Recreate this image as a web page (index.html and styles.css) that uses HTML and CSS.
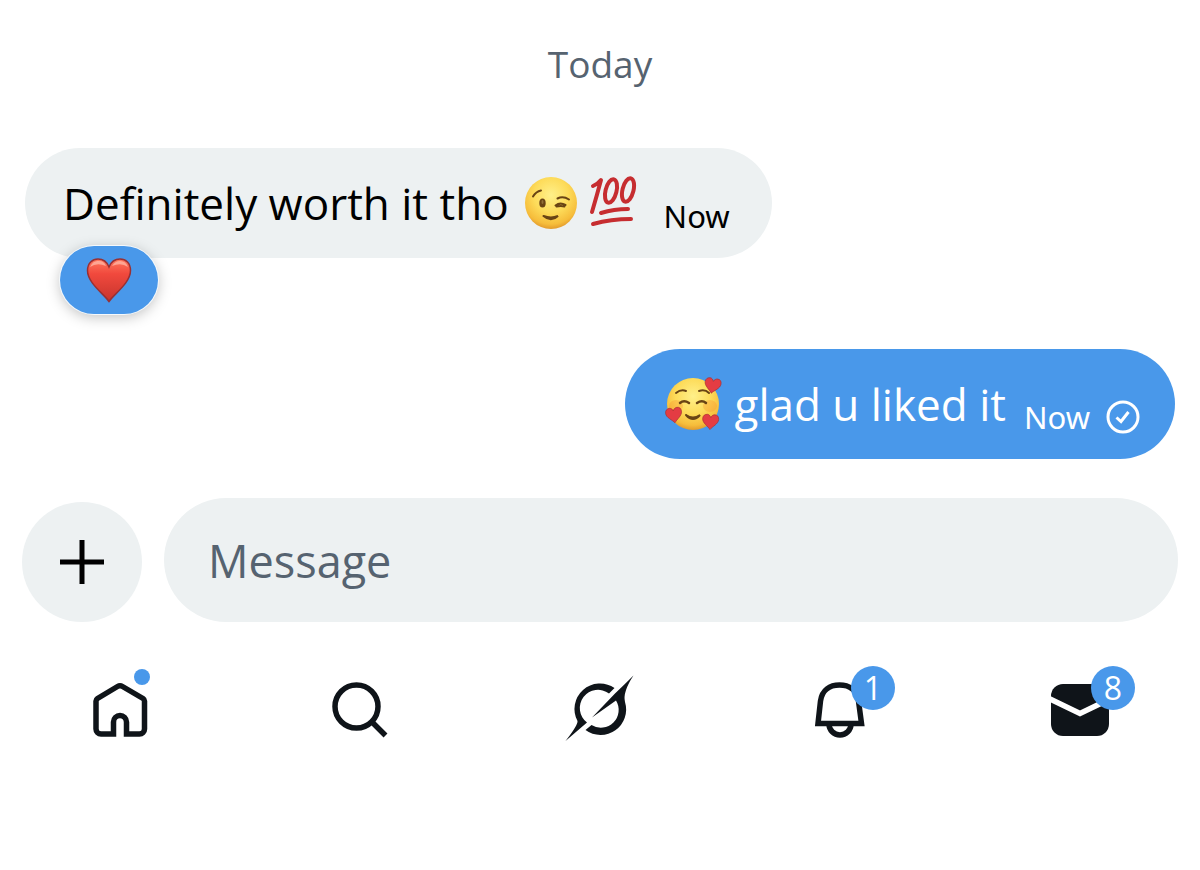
FILE: index.html
```html
<!doctype html>
<html lang="en">
	<head>
		<title>Messages</title>
		<meta charset="utf-8">
		<meta name="viewport" content="width=device-width, initial-scale=1">
		<link rel="stylesheet" href="styles.css">
	</head>
	<body>

		<main class="chat">
			<p class="day">Today</p>

			<!-- received -->
			<div class="row">
				<div class="bubble bubble-in">
					<span class="text">Definitely worth it tho</span>
					<svg class="emoji wink" viewBox="0 0 54 54" role="img" aria-label="winking face">
						<defs>
							<radialGradient id="face" cx="50%" cy="35%" r="68%">
								<stop offset="0" stop-color="#fff08a"/>
								<stop offset=".5" stop-color="#fddb59"/>
								<stop offset=".82" stop-color="#f6bd3b"/>
								<stop offset="1" stop-color="#dc9028"/>
							</radialGradient>
						</defs>
						<circle cx="27" cy="27" r="26" fill="url(#face)"/>
						<g fill="none" stroke="#694414" stroke-width="2" stroke-linecap="round">
							<path d="M9 20.500Q12 15.500 17 14.500M33.500 22.500Q39 19.500 45 23.500"/>
							<path d="M31.500 29.500Q36 26 41.500 29M32.500 30.500Q37 29.500 40.500 30.500"/>
							<path d="M19.500 40Q27 46.500 34 40Q27 43 19.500 40" fill="#694414"/>
						</g>
						<ellipse cx="18.500" cy="27" rx="3.200" ry="4.500" fill="#694414"/>
						<ellipse cx="18.500" cy="26" rx="1" ry="2" fill="#93713a"/>
					</svg>
					<svg class="emoji hundred" viewBox="0 0 50 54" role="img" aria-label="hundred points">
						<g fill="none" stroke="#c62d30" stroke-width="4" stroke-linecap="round" stroke-linejoin="round">
							<path d="M4 10Q9 8 12 4Q8 19 3 36"/>
							<ellipse cx="22" cy="15" rx="5.500" ry="12" transform="rotate(14 22 15)"/>
							<ellipse cx="39" cy="14" rx="5.500" ry="12" transform="rotate(14 39 14)"/>
							<path d="M12 37Q25 33 39 33M4 48Q22 43 42 43"/>
						</g>
					</svg>
					<span class="time">Now</span>
				</div>
				<button class="reaction" type="button" aria-label="Heart reaction">
					<svg class="heart" viewBox="0 0 46 46">
						<defs>
							<linearGradient id="red" x1="0" y1="0" x2="0" y2="1">
								<stop offset="0" stop-color="#ff795f"/>
								<stop offset=".35" stop-color="#f1493d"/>
								<stop offset="1" stop-color="#c7342d"/>
							</linearGradient>
						</defs>
						<path d="M23 44.500C18 37 1.500 26 1.500 13.500C1.500 6 6.500 2 12 2C17 2 21 5 23 10C25 5 29 2 34 2C40 2 44.500 6 44.500 13.500C44.500 26 28 37 23 44.500Z" fill="url(#red)" stroke="#993033" stroke-width="1.500"/>
						<path d="M4 10Q7 3 13 4Q18 4 20 9Q11 5 4 10M26 9Q29 4 34 4Q40 4 42 10Q35 5 26 9" fill="#ffc4b6" opacity=".65"/>
					</svg>
				</button>
			</div>

			<!-- sent -->
			<div class="row row-out">
				<div class="bubble bubble-out">
					<svg class="emoji love" viewBox="0 0 58 56" role="img" aria-label="smiling face with hearts">
						<defs>
							<path id="mini-heart" d="M8 15C6 12 0 9 0 4.500C0 1.500 2 0 4.500 0C6 0 7.500 1.500 8 3C8.500 1.500 10 0 12 0C14.500 0 16 1.500 16 4.500C16 9 10 12 8 15Z" fill="#e43c43" stroke="#a93132" stroke-width=".7"/>
						</defs>
						<circle cx="29" cy="28" r="26" fill="url(#face)"/>
						<ellipse cx="12" cy="30" rx="7" ry="6" fill="#f98b2c" opacity=".3"/>
						<ellipse cx="46" cy="30" rx="7" ry="6" fill="#f98b2c" opacity=".3"/>
						<g fill="none" stroke="#694414" stroke-width="2" stroke-linecap="round">
							<path d="M12 17Q17 13 22 15M35 15Q41 13 45 17"/>
							<path d="M16 27Q20 23.500 25 27M33 27Q38 23.500 42 27" stroke-width="2.500"/>
							<path d="M22 39Q29 44 36 39Q29 47 22 39" fill="#694414"/>
						</g>
						<use href="#mini-heart" transform="translate(42 1) rotate(10)"/>
						<use href="#mini-heart" transform="translate(1 33) rotate(-8)"/>
						<use href="#mini-heart" transform="translate(39 38) rotate(4)"/>
					</svg>
					<span class="text">glad u liked it</span>
					<span class="time">Now</span>
					<svg class="check" viewBox="0 0 34 34" role="img" aria-label="Sent">
						<circle cx="17" cy="17" r="15" fill="none" stroke="#fff" stroke-width="3"/>
						<path d="M10.500 17.500L15 21.500L22.500 12" fill="none" stroke="#fff" stroke-width="3"/>
					</svg>
				</div>
			</div>
		</main>

		<form class="composer">
			<button class="add" type="button" aria-label="Add attachment">
				<svg class="plus" viewBox="0 0 44 44">
					<path d="M22 0V44M0 22H44" stroke="#000" stroke-width="5"/>
				</svg>
			</button>
			<input class="field" type="text" placeholder="Message" aria-label="Message">
		</form>

		<nav class="tabs">
			<a class="tab" href="#home" aria-label="Home">
				<svg class="icon" viewBox="15 15 70 70">
					<path class="line" d="M43.500 74H31A5 5 0 0 1 26 69V41Q26 39.500 27.500 38.500L47.500 26.500Q50 25 52.500 26.500L73 38.500Q74.500 39.500 74.500 41V69A5 5 0 0 1 69.500 74H56.500V62A6.500 6.500 0 0 0 43.500 62Z"/>
				</svg>
				<span class="dot"></span>
			</a>
			<a class="tab" href="#search" aria-label="Search">
				<svg class="icon" viewBox="15 15 70 70">
					<circle class="line" cx="46.500" cy="46.500" r="21.500"/>
					<path class="line" d="M62 62L75.500 75.500"/>
				</svg>
			</a>
			<a class="tab" href="#grok" aria-label="Grok">
				<svg class="icon" viewBox="15 15 70 70">
					<path d="M64.500 28A25.500 25.500 0 0 0 27.500 61Q28 65 15.500 81L37 62.500A17.800 17.800 0 0 1 59 33.500Z"/>
					<path d="M42 57.500L65 33.500Q74 25 83.500 15.500Q72.500 32 75 42A25.500 25.500 0 0 1 35.500 70L41.500 65A17.800 17.800 0 0 0 66 40.500Z"/>
				</svg>
			</a>
			<a class="tab" href="#notifications" aria-label="Notifications">
				<svg class="icon" viewBox="5 20 70 70">
					<path class="line" d="M18 68.500L20.500 46C22 35 30 30 39.500 30S57 35 58.500 46L61.500 68.500Z"/>
					<path class="line" d="M29 69A10.500 10.500 0 0 0 51 69"/>
				</svg>
				<span class="badge">1</span>
			</a>
			<a class="tab" href="#messages" aria-label="Messages">
				<svg class="icon" viewBox="10 20 70 70">
					<rect x="16" y="29" width="58" height="52" rx="12"/>
					<path d="M14 43.500L45 58.500L76 43.500" fill="none" stroke="#fff" stroke-width="5.500"/>
				</svg>
				<span class="badge">8</span>
			</a>
		</nav>
	</body>
</html>
```

FILE: styles.css
```css
*{
	box-sizing:border-box;
}

body{
	margin:0;
	background:#fff;
	color:#000;
	font-family:"Open Sans","Noto Sans",sans-serif;
}

svg{
	display:block;
	flex:none;
}

button{
	border:0;
	padding:0;
	cursor:pointer;
}

/** messages **/
.chat{
	padding:39px 25px 0;
}

.day{
	margin:0 0 59px;
	font-size:37px;
	line-height:50px;
	text-align:center;
	color:#566370;
}

.row{
	position:relative;
	display:flex;
	margin-bottom:91px;
}

.row-out{
	justify-content:flex-end;
	margin-bottom:39px;
}

.bubble{
	display:flex;
	align-items:center;
	height:110px;
	padding:0 42px 0 38px;
	border-radius:55px;
}

.bubble-in{
	background:#edf1f2;
}

.bubble-out{
	padding:0 35px 0 39px;
	background:#4998ea;
	color:#fff;
}

.text{
	font-size:44px;
	line-height:60px;
	white-space:nowrap;
}

.time{
	margin:26px 0 0 18px;
	font-family:"Noto Sans","Open Sans",sans-serif;
	font-size:31px;
	line-height:44px;
}

.wink{
	width:54px;
	margin-left:15px;
}

.hundred{
	width:50px;
	margin:0 7px 0 11px;
}

.love{
	width:58px;
	margin-right:13px;
}

.check{
	width:34px;
	margin:26px 0 0 16px;
}

/** sits over the bottom edge of the bubble **/
.reaction{
	position:absolute;
	left:35px;
	top:98px;
	display:flex;
	align-items:center;
	justify-content:center;
	width:98px;
	height:68px;
	border-radius:34px;
	background:#4998ea;
	box-shadow:0 0 0 1px #f5f9fc, 0 3px 14px rgba(0,0,0,.25);
}

.heart{
	width:46px;
}

/** composer **/
.composer{
	display:flex;
	align-items:flex-end;
	gap:22px;
	padding:0 22px;
}

.add{
	display:flex;
	flex:none;
	align-items:center;
	justify-content:center;
	width:120px;
	height:120px;
	border-radius:50%;
	background:#edf1f2;
}

.plus{
	width:44px;
}

.field{
	flex:1;
	min-width:0;
	height:124px;
	padding:0 44px;
	border:0;
	border-radius:62px;
	background:#edf1f2;
	font-family:inherit;
	font-size:45px;
	color:#000;
}

.field::placeholder{
	color:#566370;
	opacity:1;
}

/** bottom tabs **/
.tabs{
	display:grid;
	grid-template-columns:repeat(5,1fr);
	justify-items:center;
	padding:53px 0 40px;
}

.tab{
	position:relative;
	color:#0f1419;
	text-decoration:none;
}

.icon{
	width:70px;
	fill:currentColor;
}

.line{
	fill:none;
	stroke:currentColor;
	stroke-width:5.5;
}

.dot{
	position:absolute;
	top:-6px;
	left:49px;
	width:16px;
	height:16px;
	border-radius:50%;
	background:#4998ea;
}

.badge{
	position:absolute;
	top:-9px;
	left:46px;
	width:44px;
	height:44px;
	border-radius:50%;
	background:#4998ea;
	color:#fff;
	font-size:32px;
	line-height:44px;
	text-align:center;
}
```
